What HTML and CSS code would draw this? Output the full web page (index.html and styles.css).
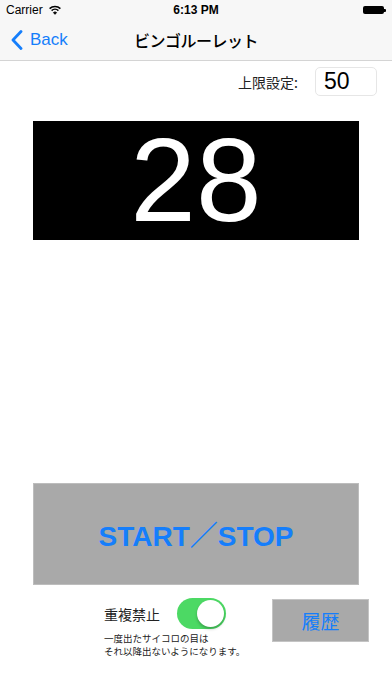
FILE: index.html
```html
<!DOCTYPE html>
<html lang="ja">
<head>
<meta charset="utf-8">
<title>ビンゴルーレット</title>
<link rel="stylesheet" href="styles.css">
</head>
<body>
<div class="screen">
  <header class="top">
    <div class="status">
      <div class="status-left">
        <span class="carrier">Carrier</span>
        <svg class="wifi" width="12" height="10" viewBox="0 0 12 10">
          <path d="M0.6 3.6 A7.8 7.8 0 0 1 11.4 3.6" fill="none" stroke="#000" stroke-width="1.5"/>
          <path d="M2.6 5.6 A5 5 0 0 1 9.4 5.6" fill="none" stroke="#000" stroke-width="1.5"/>
          <path d="M4.5 7.6 A2.2 2.2 0 0 1 7.5 7.6 L6 9.3 Z" fill="#000" stroke="#000" stroke-width="1"/>
        </svg>
      </div>
      <div class="time">6:13 PM</div>
      <div class="status-right">
        <span class="battery"><span class="battery-body"></span><span class="battery-nub"></span></span>
      </div>
    </div>
    <nav class="navbar">
      <a class="back">
        <svg class="chevron" width="12" height="20" viewBox="0 0 12 20">
          <path d="M10 1.5 L2 10 L10 18.5" fill="none" stroke="#157efb" stroke-width="2.8" stroke-linecap="round" stroke-linejoin="round"/>
        </svg>
        <span>Back</span>
      </a>
      <div class="title">ビンゴルーレット</div>
    </nav>
  </header>

  <main class="content">
    <div class="limit-row">
      <span class="limit-label">上限設定:</span>
      <div class="limit-input">50</div>
    </div>

    <div class="display">28</div>

    <div class="spacer"></div>

    <button class="start-btn">START／STOP</button>

    <div class="bottom">
      <div class="dup">
        <div class="dup-row">
          <span class="dup-label">重複禁止</span>
          <span class="toggle"><span class="knob"></span></span>
        </div>
        <p class="dup-note">一度出たサイコロの目は<br>それ以降出ないようになります。</p>
      </div>
      <button class="history-btn">履歴</button>
    </div>
  </main>
</div>
</body>
</html>
```

FILE: styles.css
```css
html, body {
  margin: 0;
  padding: 0;
  background: #fff;
}
body {
  font-family: "Liberation Sans", "Noto Sans CJK JP", sans-serif;
  color: #000;
}
.screen {
  width: 392px;
  height: 696px;
  display: flex;
  flex-direction: column;
  overflow: hidden;
}
.top {
  background: #f7f7f7;
  border-bottom: 1px solid #d4d4d4;
}
.status {
  height: 20px;
  display: grid;
  grid-template-columns: 1fr auto 1fr;
  align-items: center;
  font-size: 12px;
}
.status-left {
  display: flex;
  align-items: center;
  gap: 6px;
  padding-left: 6px;
}
.carrier {
  font-size: 12px;
}
.wifi {
  display: block;
}
.time {
  font-weight: bold;
  font-size: 12px;
}
.status-right {
  display: flex;
  justify-content: flex-end;
  padding-right: 6px;
}
.battery {
  display: flex;
  align-items: center;
}
.battery-body {
  width: 21px;
  height: 8px;
  background: #000;
  border-radius: 2px;
}
.battery-nub {
  width: 2px;
  height: 3px;
  background: #000;
  border-radius: 0 1px 1px 0;
}
.navbar {
  height: 40px;
  display: grid;
  grid-template-columns: 1fr auto 1fr;
  align-items: center;
}
.back {
  display: flex;
  align-items: center;
  gap: 7px;
  padding-left: 11px;
  color: #157efb;
  font-size: 17px;
}
.chevron {
  display: block;
}
.title {
  font-family: "Noto Sans CJK JP", sans-serif;
  font-size: 16px;
  font-weight: 500;
  letter-spacing: -0.5px;
}
.content {
  flex: 1;
  display: flex;
  flex-direction: column;
  padding: 0 33px;
}
.limit-row {
  display: flex;
  justify-content: flex-end;
  align-items: center;
  gap: 17px;
  margin-top: 6px;
  margin-right: -18px;
}
.limit-label {
  font-family: "Noto Sans CJK JP", sans-serif;
  font-size: 14px;
  color: #222;
}
.limit-input {
  width: 52px;
  height: 27px;
  border: 1px solid #e6e6e6;
  border-radius: 5px;
  font-size: 23px;
  line-height: 27px;
  padding-left: 8px;
}
.display {
  margin-top: 25px;
  height: 119px;
  background: #000;
  color: #fff;
  font-size: 118px;
  line-height: 119px;
  text-align: center;
}
.spacer {
  flex: 1;
}
.start-btn {
  height: 102px;
  border: 1px solid #bdbdbd;
  background: #a9a9a9;
  color: #157efb;
  font-family: "Liberation Sans", "Noto Sans CJK JP", sans-serif;
  font-size: 28px;
  font-weight: bold;
  padding: 0;
}
.bottom {
  display: flex;
  align-items: flex-start;
  margin: 13px -10px 38px 71px;
}
.dup {
  display: flex;
  flex-direction: column;
}
.dup-row {
  display: flex;
  align-items: center;
  gap: 17px;
}
.dup-label {
  font-family: "Noto Sans CJK JP", sans-serif;
  font-size: 14px;
  color: #222;
}
.toggle {
  width: 49px;
  height: 31px;
  border-radius: 16px;
  background: #4cd964;
  position: relative;
}
.knob {
  position: absolute;
  right: 2px;
  top: 2px;
  width: 27px;
  height: 27px;
  border-radius: 50%;
  background: #fff;
  box-shadow: 0 2px 3px rgba(0,0,0,0.25);
}
.dup-note {
  margin: 3px 0 0;
  font-family: "Noto Sans CJK JP", sans-serif;
  font-size: 9.5px;
  line-height: 13px;
  color: #222;
}
.history-btn {
  margin-left: auto;
  margin-top: 1px;
  width: 97px;
  height: 43px;
  border: 1px solid #c4c4c4;
  background: #a9a9a9;
  color: #157efb;
  font-family: "Noto Sans CJK JP", sans-serif;
  font-size: 19px;
  padding: 0;
}
```
